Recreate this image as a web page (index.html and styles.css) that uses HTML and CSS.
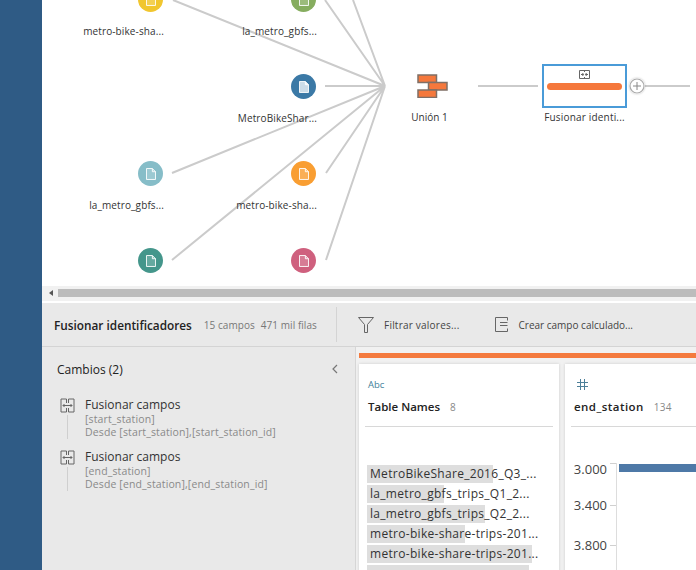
FILE: index.html
```html
<!DOCTYPE html>
<html lang="es">
<head>
<meta charset="utf-8">
<title>Fusionar identificadores</title>
<link rel="stylesheet" href="styles.css">
</head>
<body>
<svg class="sprites" width="0" height="0">
  <symbol id="doc" viewBox="0 0 11 13"><path d="M.5.5h6.500l3.500 3.500v8.500h-10z"/><path class="fold" d="M7 .5v3.500h3.500"/></symbol>
  <symbol id="merge" viewBox="0 0 15 15"><path d="M6.500 5V1H1v13h5.500v-4M8.500 5V1H14v13H8.500v-4M3 7.500h9M4.500 6 3 7.500 4.500 9M10.500 6 12 7.500 10.500 9"/></symbol>
  <symbol id="merge-box" viewBox="0 0 11 9"><path d="M.5.500h10v8H.5zM5.500.5v1.500M5.500 7v1.500M2 4.500h2.500M6.500 4.500H9M3.500 3l1 1.500-1 1.500M7.500 3l-1 1.500 1 1.500"/></symbol>
</svg>
<div class="app">
  <nav class="rail"></nav>
  <main class="main">
    <section class="canvas">
      <svg class="links" width="654" height="286" viewBox="42 0 654 286">
        <path d="M173 0 385 86M325 0 385 86M353 0 385 86M325 86H385M172 173 385 86M172 260 385 86M326 173 385 86M326 260 385 86M478 86H538M645 86H690"/>
      </svg>

      <div class="node c1 r1"><span class="dot yellow"><svg class="doc"><use href="#doc"/></svg></span><span class="label">metro-bike-sha...</span></div>
      <div class="node c2 r1"><span class="dot green"><svg class="doc"><use href="#doc"/></svg></span><span class="label">la_metro_gbfs...</span></div>
      <div class="node c2 r2"><span class="dot blue"><svg class="doc solid"><use href="#doc"/></svg></span><span class="label">MetroBikeShar...</span></div>
      <div class="node c1 r3"><span class="dot aqua"><svg class="doc"><use href="#doc"/></svg></span><span class="label">la_metro_gbfs...</span></div>
      <div class="node c2 r3"><span class="dot orange"><svg class="doc"><use href="#doc"/></svg></span><span class="label">metro-bike-sha...</span></div>
      <div class="node c1 r4"><span class="dot teal"><svg class="doc"><use href="#doc"/></svg></span></div>
      <div class="node c2 r4"><span class="dot pink"><svg class="doc"><use href="#doc"/></svg></span></div>

      <div class="union">
        <svg class="union-icon" width="31" height="24" viewBox="0 0 31 24">
          <rect x="1" y="1" width="18.500" height="7.500"/>
          <rect x="11.500" y="8.500" width="18.500" height="7.500"/>
          <rect x="1" y="16" width="18.500" height="7.500"/>
        </svg>
        <span class="label">Unión 1</span>
      </div>

      <div class="step">
        <div class="step-box">
          <svg class="merge-mini"><use href="#merge-box"/></svg>
          <span class="step-bar"></span>
        </div>
        <span class="label">Fusionar identi...</span>
      </div>
      <span class="add"><svg width="16" height="16" viewBox="0 0 16 16"><circle cx="8" cy="8" r="7"/><path d="M8 4v8M4 8h8"/></svg></span>
    </section>

    <div class="scrollbar"><span class="scroll-arrow"></span><span class="scroll-thumb"></span></div>

    <header class="toolbar">
      <div class="tb-title">
        <strong>Fusionar identificadores</strong>
        <span>15 campos</span>
        <span>471 mil filas</span>
      </div>
      <div class="tb-actions">
        <svg class="filter-icon" width="16" height="16" viewBox="0 0 16 16"><path d="M.5 .5h15L9.500 7.500v8h-3v-8z"/></svg>
        <span class="tb-action tb-wide">Filtrar valores...</span>
        <svg class="calc-icon" width="13" height="15" viewBox="0 0 13 15"><path d="M12.500 3.500V.5H.5v14h12v-3M5 5.500h7.500M5 8.500h7.500"/></svg>
        <span class="tb-action">Crear campo calculado...</span>
      </div>
    </header>

    <div class="lower">
      <aside class="changes">
        <div class="changes-head">
          <h2>Cambios (2)</h2>
          <svg width="7" height="10" viewBox="0 0 7 10"><path d="M6 1 2 5l4 4"/></svg>
        </div>
        <div class="change">
          <div class="change-mark"><svg class="merge-big"><use href="#merge"/></svg><i></i></div>
          <div class="change-text">
            <h3>Fusionar campos</h3>
            <p>[start_station]</p>
            <p>Desde [start_station],[start_station_id]</p>
          </div>
        </div>
        <div class="change">
          <div class="change-mark"><svg class="merge-big"><use href="#merge"/></svg><i></i></div>
          <div class="change-text">
            <h3>Fusionar campos</h3>
            <p>[end_station]</p>
            <p>Desde [end_station],[end_station_id]</p>
          </div>
        </div>
      </aside>

      <section class="profile">
        <div class="profile-bar"></div>
        <div class="cards">
          <article class="card card-text">
            <div class="type type-abc">Abc</div>
            <div class="card-head"><b>Table Names</b><span>8</span></div>
            <ul class="values">
              <li><i class="w1"></i><span>MetroBikeShare_2016_Q3_...</span></li>
              <li><i class="w2"></i><span>la_metro_gbfs_trips_Q1_2...</span></li>
              <li><i class="w3"></i><span>la_metro_gbfs_trips_Q2_2...</span></li>
              <li><i class="w4"></i><span>metro-bike-share-trips-201...</span></li>
              <li><i class="w5"></i><span>metro-bike-share-trips-201...</span></li>
              <li><i class="w6"></i><span></span></li>
            </ul>
          </article>
          <article class="card card-num">
            <div class="type type-num">
              <svg width="11" height="11" viewBox="0 0 11 11"><path d="M3.500 0v11M7.500 0v11M0 3.500h11M0 7.500h11"/></svg>
            </div>
            <div class="card-head card-head-wide"><b>end_station</b><span>134</span></div>
            <div class="chart">
              <div class="axis">
                <div class="tick"><span>3.000</span><i></i></div>
                <div class="tick"><span>3.400</span><i></i></div>
                <div class="tick"><span>3.800</span><i></i></div>
              </div>
              <div class="plot"><span class="bar"></span></div>
            </div>
          </article>
        </div>
      </section>
    </div>
  </main>
</div>
</body>
</html>
```

FILE: styles.css
```css
* { box-sizing: border-box; }
html, body { margin: 0; padding: 0; }
body {
  width: 696px;
  height: 570px;
  overflow: hidden;
  background: #fff;
  color: #333;
  font-family: "Open Sans", "Noto Sans", sans-serif;
  font-size: 10px;
}
.sprites { position: absolute; }
.app { display: flex; width: 696px; height: 570px; }
.rail { flex: 0 0 42px; background: #2f5b85; }
.main { flex: 1; min-width: 0; display: flex; flex-direction: column; }

/* canvas */
.canvas { position: relative; height: 286px; flex: none; overflow: hidden; background: #fff; }
.links { position: absolute; left: 0; top: 0; }
.links path { fill: none; stroke: #cbcbcb; stroke-width: 2; }

.node { position: absolute; width: 82px; display: flex; flex-direction: column; align-items: flex-end; }
.c1 { left: 40px; }
.c2 { left: 193px; }
.r1 { top: -13px; }
.r2 { top: 74px; }
.r3 { top: 161px; }
.r4 { top: 248px; }
.dot {
  width: 25px; height: 25px; border-radius: 50%;
  display: flex; align-items: center; justify-content: center;
  align-self: flex-start; margin-left: 56px;
}
.yellow { background: #f1c62f; }
.green { background: #86ad5f; }
.blue { background: #3b79a6; }
.aqua { background: #86bdc8; }
.orange { background: #f99e32; }
.teal { background: #44968b; }
.pink { background: #cf607e; }
.doc { width: 10px; height: 12px; fill: rgba(255,255,255,.18); stroke: #fff; stroke-width: 1; }
.doc.solid { fill: rgba(255,255,255,.75); }
.label { font-size: 10px; line-height: 14px; letter-spacing: .12px; white-space: nowrap; color: #333; text-align: right; }
.node .label { margin-top: 12px; }
.union { position: absolute; left: 355px; top: 74px; width: 70px; display: flex; flex-direction: column; align-items: center; }
.union-icon rect { fill: #f5783c; stroke: #7f6f66; stroke-width: 1.500; }
.union .label { margin: 12px 5px 0 0; letter-spacing: 0; }
.step { position: absolute; left: 500px; top: 64px; width: 85px; display: flex; flex-direction: column; align-items: center; }
.step-box {
  width: 85px; height: 44px; border: 2px solid #4a9bd8; background: #fff;
  display: flex; flex-direction: column; align-items: center; padding: 4px 3px 0;
}
.merge-mini { width: 11px; height: 9px; fill: none; stroke: #666; stroke-width: 1; flex: none; }
.step-bar { display: block; width: 75px; height: 7px; margin-top: 4px; background: #f5783c; border-radius: 4px; }
.step .label { margin-top: 2px; letter-spacing: .18px; }
.add { position: absolute; left: 587px; top: 78px; display: block; line-height: 0; background: #fff; border-radius: 50%; box-shadow: 0 0 2px rgba(0,0,0,.25); }
.add circle { fill: #fff; stroke: #aaa; stroke-width: 1.200; }
.add path { stroke: #888; stroke-width: 1; fill: none; }

/* scrollbar */
.scrollbar { flex: none; height: 17px; background: #f1f1f1; border-bottom: 2px solid #fff; display: flex; align-items: center; padding: 0 0 1px 7px; }
.scroll-arrow { width: 0; height: 0; border: 3px solid transparent; border-right: 4px solid #555; border-left: 0; margin-right: 5px; }
.scroll-thumb { flex: 1; height: 8px; background: #bcbcbc; }

/* toolbar */
.toolbar { flex: none; height: 44px; background: #e9e9e9; border-bottom: 1px solid #d4d4d4; display: flex; align-items: center; }
.tb-title { width: 295px; height: 35px; padding-left: 12px; border-right: 1px solid #d4d4d4; display: flex; align-items: center; gap: 6px; color: #777; font-size: 10px; letter-spacing: .05px; white-space: nowrap; }
.tb-title strong { font-size: 11.800px; font-weight: 600; letter-spacing: 0; color: #222; margin-right: 6px; }
.tb-actions { display: flex; align-items: center; margin-left: 21px; color: #444; }
.tb-action { font-size: 10px; white-space: nowrap; }
.tb-wide { letter-spacing: .22px; }
.filter-icon { fill: none; stroke: #666; margin-right: 10px; }
.calc-icon { fill: none; stroke: #666; margin: 0 11px 0 35px; }

/* lower */
.lower { flex: 1; min-height: 0; display: flex; }
.changes { flex: none; width: 314px; background: #e9e9e9; border-right: 1px solid #d6d6d6; padding: 13px 17px 0 15px; }
.changes-head { display: flex; align-items: center; justify-content: space-between; height: 18px; margin-bottom: 19px; }
.changes-head h2 { margin: 0; font-size: 12px; font-weight: 500; color: #222; }
.changes-head svg { fill: none; stroke: #777; stroke-width: 1.200; }
.change { display: flex; height: 52px; }
.change-mark { flex: none; width: 28px; padding-left: 3px; display: flex; flex-direction: column; }
.merge-big { width: 15px; height: 15px; fill: none; stroke: #666; stroke-width: 1; margin-top: 1px; }
.change-mark i { width: 1px; height: 24px; margin: 2px 0 0 7px; background: #cfcfcf; }
.change-text h3 { margin: 0 0 1px; font-size: 12px; line-height: 15px; font-weight: 400; color: #333; white-space: nowrap; }
.change-text p { margin: 0; font-size: 10.500px; line-height: 13px; letter-spacing: .13px; color: #8a8a8a; white-space: nowrap; }

.profile { flex: 1; min-width: 0; background: #f1f1f1; padding: 6px 0 0 3px; display: flex; flex-direction: column; overflow: hidden; }
.profile-bar { flex: none; height: 5px; background: #f47a3e; }
.cards { flex: 1; min-height: 0; display: flex; gap: 6px; margin-top: 6px; }
.card { flex: none; width: 200px; height: 220px; background: #fff; box-shadow: 0 0 3px rgba(0,0,0,.15); padding: 0 6px; }
.type { height: 16px; margin-top: 12px; display: flex; align-items: center; }
.type-abc { padding-left: 3px; font-size: 9.500px; color: #3f7f9a; }
.type-num { padding-left: 6px; }
.type-num svg { fill: none; stroke: #4d7f99; stroke-width: 1; }
.card-head { height: 35px; border-bottom: 1px solid #d8d8d8; padding: 7px 0 0 3px; display: flex; align-items: baseline; gap: 10px; white-space: nowrap; }
.card-head b { font-size: 11.500px; font-weight: 600; color: #222; }
.card-head span { font-size: 10px; color: #888; }
.card-head-wide b { letter-spacing: .45px; }
.card-head-wide span { letter-spacing: .3px; }
.values { list-style: none; margin: 38px 0 0; padding: 0 0 0 2px; display: flex; flex-direction: column; gap: 2px; }
.values li { position: relative; height: 18px; }
.values i { position: absolute; left: 0; top: 0; height: 18px; background: #dedede; }
.w1 { width: 126px; }
.w2 { width: 77px; }
.w3 { width: 118px; }
.w4 { width: 98px; }
.w5 { width: 165px; }
.w6 { width: 162px; }
.values span { position: relative; display: block; padding-left: 3px; font-size: 12px; line-height: 18px; letter-spacing: .3px; white-space: nowrap; color: #333; }
.chart { display: flex; margin-top: 36px; }
.axis { flex: none; width: 46px; display: flex; flex-direction: column; border-right: 1px solid #ddd; height: 200px; }
.tick { height: 18px; display: flex; align-items: center; justify-content: flex-end; gap: 3px; }
.tick:first-child { margin: -3px 0 18px; }
.tick:first-child i { transform: translateY(-6px); }
.tick:nth-child(2) { margin-bottom: 22px; }
.tick span { font-size: 13px; color: #444; }
.tick i { width: 6px; height: 1px; background: #d0d0d0; }
.plot { flex: 1; padding: 1px 0 0 2px; }
.bar { display: block; height: 8px; background: #4e79a7; }
```
